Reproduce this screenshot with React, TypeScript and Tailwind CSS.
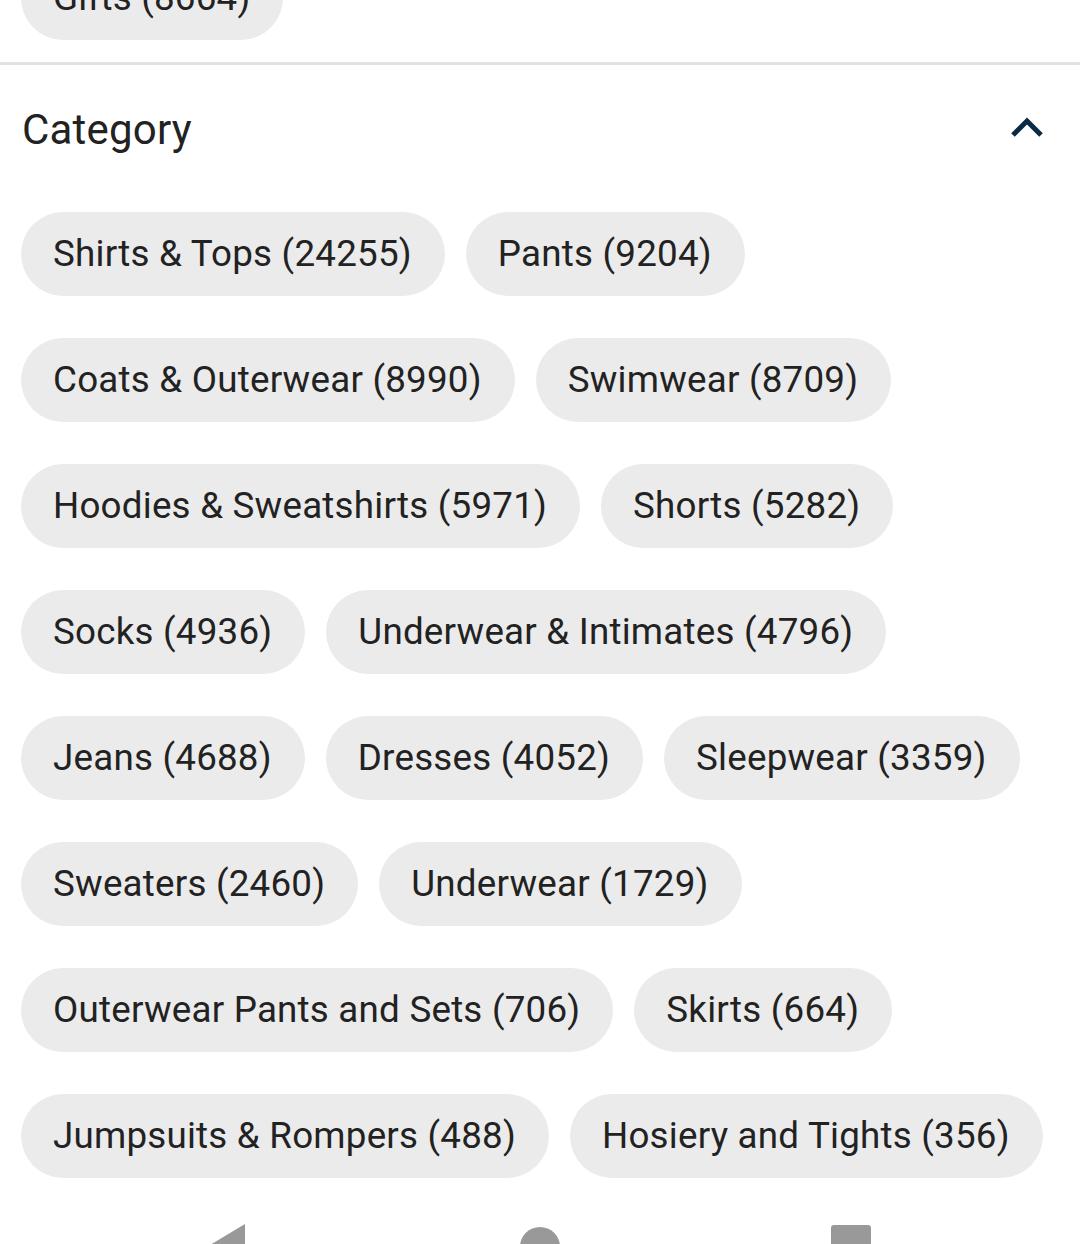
import React from "react";

const chips = [
  "Shirts & Tops (24255)",
  "Pants (9204)",
  "Coats & Outerwear (8990)",
  "Swimwear (8709)",
  "Hoodies & Sweatshirts (5971)",
  "Shorts (5282)",
  "Socks (4936)",
  "Underwear & Intimates (4796)",
  "Jeans (4688)",
  "Dresses (4052)",
  "Sleepwear (3359)",
  "Sweaters (2460)",
  "Underwear (1729)",
  "Outerwear Pants and Sets (706)",
  "Skirts (664)",
  "Jumpsuits & Rompers (488)",
  "Hosiery and Tights (356)",
];

function Chip({ label }: { label: string }) {
  return (
    <div className="h-[84px] shrink-0 pl-[32px] pr-[33px] rounded-full bg-[#ebebeb] flex items-center text-[36.75px] tracking-[0.22px] text-[#222222] whitespace-nowrap leading-none">
      {label}
    </div>
  );
}

export default function App() {
  return (
    <div
      className="w-[1080px] h-[1244px] overflow-hidden bg-white flex flex-col"
      style={{ fontFamily: "Roboto, 'Noto Sans', sans-serif" }}
    >
      <div className="mt-[-44px] pl-[21px] flex shrink-0">
        <Chip label="Gifts (8664)" />
      </div>
      <div className="mt-[22px] h-[3px] shrink-0 bg-[#e2e2e2]" />
      <div className="h-[130px] shrink-0 flex items-center justify-between pl-[22px] pr-[35px]">
        <span className="text-[42px] tracking-[0.2px] text-[#222222] leading-none">Category</span>
        <svg width="36" height="24" viewBox="0 0 36 24" className="mb-[6px]">
          <polyline
            points="4,20 18,6 32,20"
            fill="none"
            stroke="#0b2a44"
            strokeWidth="5"
          />
        </svg>
      </div>
      <div className="pt-[17px] px-[21px] shrink-0 flex flex-wrap gap-x-[21px] gap-y-[42px]">
        {chips.map((c) => (
          <Chip key={c} label={c} />
        ))}
      </div>
      <div className="mt-[44px] pl-[205px] flex items-start shrink-0">
        <svg width="42" height="48" viewBox="0 0 42 48" className="mt-[2px]">
          <polygon points="40,0 40,48 0,24" fill="#999999" />
        </svg>
        <div className="ml-[273px] mt-[5px] w-[40px] h-[40px] rounded-full bg-[#999999]" />
        <div className="ml-[271px] mt-[3px] w-[40px] h-[40px] rounded-[3px] bg-[#999999]" />
      </div>
    </div>
  );
}
